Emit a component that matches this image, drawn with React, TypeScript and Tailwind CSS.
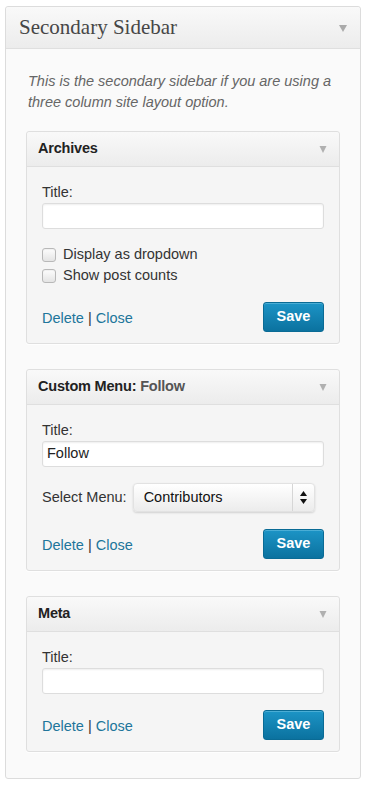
import React from "react";

const sans = { fontFamily: '"Liberation Sans", Arial, sans-serif' };

function Arrow({ size = "big" }: { size?: "big" | "small" }) {
  return size === "big" ? (
    <svg width="8" height="8" viewBox="0 0 8 8" className="block">
      <path d="M0 1 H8 L4 8 Z" fill="#aaaaaa" />
    </svg>
  ) : (
    <svg width="8" height="8" viewBox="0 0 8 8" className="block">
      <path d="M0.5 1 H7.5 L4 8 Z" fill="#b0b0b0" />
    </svg>
  );
}

function TitleField({ value = "" }: { value?: string }) {
  return (
    <div className="flex flex-col">
      <label className="text-[14.5px] leading-[16px] text-[#333]">Title:</label>
      <div className="mt-[3px] h-[26px] w-full rounded-[3px] border border-[#dddddd] bg-white shadow-[inset_0_1px_2px_rgba(0,0,0,0.07)] flex items-center px-[4px] text-[14.5px] text-[#222]">
        {value}
      </div>
    </div>
  );
}

function Actions() {
  return (
    <div className="flex items-center justify-between">
      <div className="text-[14.5px] text-[#21759b] pt-[3px]">
        <span>Delete</span>
        <span className="text-[#333]"> | </span>
        <span>Close</span>
      </div>
      <button className="h-[30px] w-[61px] rounded-[3px] border border-[#0a6b95] bg-gradient-to-b from-[#1c94c6] to-[#0b729f] text-white font-bold text-[14.5px] leading-none shadow-[inset_0_1px_0_rgba(120,200,230,0.5)] pb-[2px]">
        Save
      </button>
    </div>
  );
}

function Widget({ title, sub, children }: { title: string; sub?: string; children: React.ReactNode }) {
  return (
    <div className="rounded-[3px] border border-[#dfdfdf] bg-[#f5f5f5] shadow-[0_1px_0_rgba(255,255,255,0.8)]">
      <div className="h-[35px] border-b border-[#dfdfdf] bg-gradient-to-b from-[#f9f9f9] to-[#ececec] flex items-center justify-between pl-[11px] pr-[12px] rounded-t-[3px]">
        <div className="text-[14.5px] font-bold text-[#222] tracking-[-0.2px]">
          {title}
          {sub && <span className="text-[#555]"> {sub}</span>}
        </div>
        <Arrow size="small" />
      </div>
      <div className="px-[15px] pt-[17px] pb-[11px] flex flex-col">{children}</div>
    </div>
  );
}

function Checkbox({ label }: { label: string }) {
  return (
    <div className="h-[21px] flex items-center">
      <div className="h-[14px] w-[14px] rounded-[3px] border border-[#b8b8b8] bg-gradient-to-b from-[#fdfdfd] to-[#e4e4e4] shadow-[inset_0_1px_1px_rgba(0,0,0,0.05)]" />
      <span className="ml-[7px] text-[14.5px] text-[#333]">{label}</span>
    </div>
  );
}

export default function App() {
  return (
    <div className="min-h-[785px] w-[368px] bg-white pt-[6px] pl-[5px]" style={sans}>
      <div className="w-[356px] rounded-[3px] border border-[#dcdcdc] bg-[#fafafa]">
        <div className="h-[42px] border-b border-[#dfdfdf] bg-gradient-to-b from-[#f9f9f9] to-[#ececec] flex items-center justify-between pl-[13px] pr-[13px] rounded-t-[3px]">
          <div className="text-[21px] text-[#464646] pt-[1px]" style={{ fontFamily: '"Liberation Serif", "Times New Roman", serif' }}>
            Secondary Sidebar
          </div>
          <Arrow />
        </div>
        <div className="px-[20px] pt-[22px] pb-[26px] flex flex-col">
          <p className="italic text-[14.5px] leading-[21px] text-[#666] pl-[2px]">
            This is the secondary sidebar if you are using a three column site layout option.
          </p>
          <div className="mt-[18px] flex flex-col gap-[25px]">
            <Widget title="Archives">
              <TitleField />
              <div className="mt-[15px] flex flex-col">
                <Checkbox label="Display as dropdown" />
                <Checkbox label="Show post counts" />
              </div>
              <div className="mt-[16px]">
                <Actions />
              </div>
            </Widget>
            <Widget title="Custom Menu:" sub="Follow">
              <TitleField value="Follow" />
              <div className="mt-[16px] flex items-center">
                <span className="text-[14.5px] text-[#333]">Select Menu:</span>
                <div className="ml-[6px] h-[29px] w-[182px] rounded-[4px] border border-[#e2e2e2] bg-gradient-to-b from-[#ffffff] to-[#ececec] shadow-[0_1px_2px_rgba(0,0,0,0.15)] flex items-center">
                  <span className="flex-1 pl-[10px] text-[14.5px] text-[#111]">Contributors</span>
                  <div className="h-full w-[22px] border-l border-[#d6d6d6] flex items-center justify-center">
                    <svg width="7" height="13" viewBox="0 0 7 13" className="block">
                      <path d="M3.5 0 L7 5 H0 Z" fill="#111" />
                      <path d="M0 8 H7 L3.5 13 Z" fill="#111" />
                    </svg>
                  </div>
                </div>
              </div>
              <div className="mt-[17px]">
                <Actions />
              </div>
            </Widget>
            <Widget title="Meta">
              <TitleField />
              <div className="mt-[16px]">
                <Actions />
              </div>
            </Widget>
          </div>
        </div>
      </div>
    </div>
  );
}
